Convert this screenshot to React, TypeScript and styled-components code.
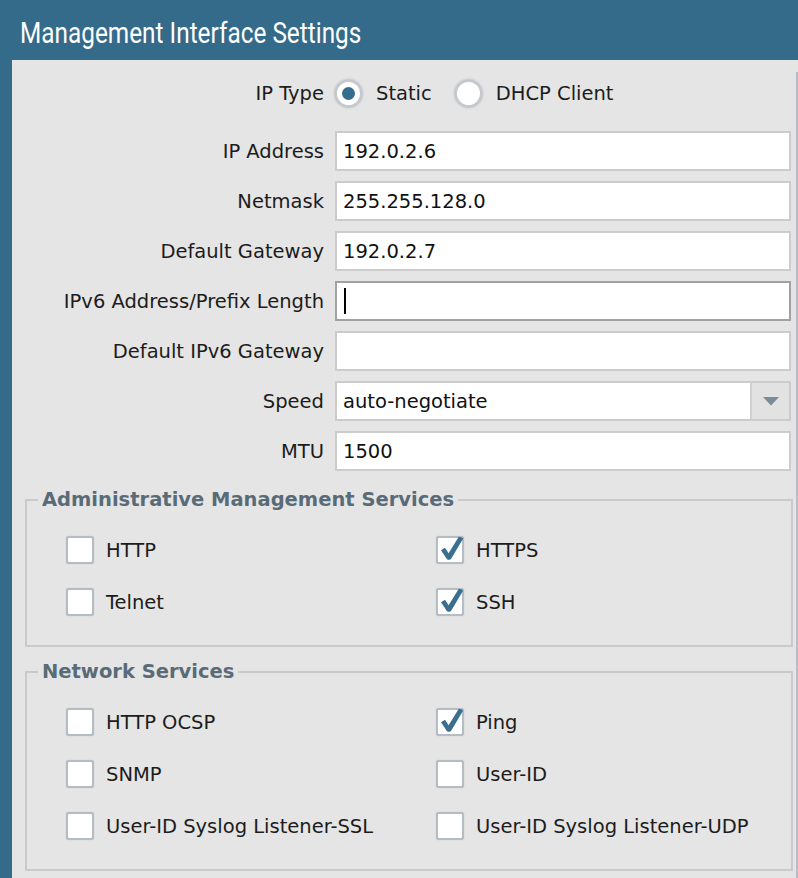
import React from "react";
import styled, { createGlobalStyle } from "styled-components";

const GlobalStyle = createGlobalStyle`
  html, body { margin: 0; padding: 0; background: #e5e5e5; }
  * { box-sizing: border-box; }
`;

const Page = styled.div`
  width: 798px;
  height: 878px;
  background: #346a8a;
  display: flex;
  flex-direction: column;
  overflow: hidden;
  font-family: "DejaVu Sans", "Liberation Sans", sans-serif;
`;

const Header = styled.header`
  height: 60px;
  flex: none;
  display: flex;
  align-items: center;
  padding: 5px 0 0 20px;
`;

const Title = styled.h1`
  margin: 0;
  font-family: Roboto, "Liberation Sans", sans-serif;
  font-weight: 400;
  font-size: 29px;
  color: #ffffff;
  white-space: nowrap;
  display: inline-block;
  transform: scaleX(0.84);
  transform-origin: left center;
`;

const Body = styled.main`
  flex: 1;
  margin-left: 12px;
  background: #e5e5e5;
  display: flex;
`;

const Content = styled.div`
  flex: 1;
  display: flex;
  flex-direction: column;
  padding-top: 13px;
`;

const ScrollTrack = styled.div`
  width: 5px;
  flex: none;
  padding-top: 12px;
  display: flex;
  justify-content: flex-end;
`;

const ScrollThumb = styled.div`
  width: 2px;
  height: 100%;
  background: #b8bcc4;
`;

const Form = styled.div`
  display: flex;
  flex-direction: column;
  gap: 10px;
  padding-right: 2px;
`;

const Row = styled.div<{ $extraBottom?: number }>`
  display: flex;
  align-items: center;
  height: 40px;
  gap: 11px;
  margin-bottom: ${(p) => p.$extraBottom ?? 0}px;
`;

const Label = styled.div`
  width: 312px;
  flex: none;
  text-align: right;
  font-size: 19.5px;
  color: #1c1c1c;
  white-space: nowrap;
`;

const Field = styled.div<{ $focused?: boolean }>`
  flex: 1;
  height: 40px;
  background: #ffffff;
  border: 2px solid ${(p) => (p.$focused ? "#a2a2a2" : "#cccccc")};
  display: flex;
  align-items: center;
  padding-left: 6px;
  font-size: 19.5px;
  color: #111111;
  white-space: nowrap;
  overflow: hidden;
`;

const FieldText = styled.span`
  flex: 1;
`;

const Caret = styled.span`
  display: inline-block;
  width: 2px;
  height: 26px;
  background: #000000;
  margin-left: 1px;
`;

const ArrowBox = styled.div`
  width: 39px;
  height: 100%;
  flex: none;
  background: #e2e2e2;
  border-left: 2px solid #d0d0d0;
  display: flex;
  align-items: center;
  justify-content: center;
`;

const RadioGroup = styled.div`
  display: flex;
  align-items: center;
`;

const RadioOption = styled.label`
  display: flex;
  align-items: center;
  gap: 14px;
  margin-right: 23px;
  font-size: 19.5px;
  color: #1c1c1c;
`;

const RadioCircle = styled.span<{ $checked?: boolean }>`
  width: 27px;
  height: 27px;
  border-radius: 50%;
  background: #ffffff;
  border: 2px solid #c3c9ce;
  box-shadow: 0 0 2px 1px rgba(120, 130, 140, 0.35);
  display: flex;
  align-items: center;
  justify-content: center;
  &::after {
    content: "";
    width: 13px;
    height: 13px;
    border-radius: 50%;
    background: ${(p) => (p.$checked ? "#356d8f" : "transparent")};
  }
`;

const Group = styled.fieldset<{ $top: number }>`
  margin: ${(p) => p.$top}px 0 0 13px;
  padding: 24px 0 29px 0;
  border: 2px solid #cacaca;
  min-width: 0;
`;

const Legend = styled.legend`
  margin-left: 11px;
  padding: 0 4px;
  font-size: 19.5px;
  line-height: 24px;
  font-weight: 700;
  color: #5a6b78;
  white-space: nowrap;
`;

const CheckGrid = styled.div`
  display: grid;
  grid-template-columns: 370px 1fr;
  row-gap: 24px;
  padding-left: 39px;
`;

const CheckItem = styled.label`
  display: flex;
  align-items: center;
  gap: 12px;
  height: 28px;
  font-size: 19.5px;
  color: #1c1c1c;
  white-space: nowrap;
`;

const Box = styled.span`
  width: 28px;
  height: 28px;
  flex: none;
  background: #ffffff;
  border: 2px solid #b4bdc5;
  border-radius: 3px;
  box-shadow: 0 0 1px rgba(90, 100, 110, 0.4);
  display: flex;
  overflow: visible;
`;

const CheckSvg = styled.svg`
  overflow: visible;
  margin: -2px;
`;

function Check({ checked, label }: { checked?: boolean; label: string }) {
  return (
    <CheckItem>
      <Box>
        {checked && (
          <CheckSvg width="28" height="28" viewBox="0 0 28 28">
            <path
              d="M5 14.2 L9 11.8 L12.6 17.2 L22.8 0.8 Q25.6 0.9 27.2 2.6 L15 23 Q13 24.6 11 23.2 Z"
              fill="#3a6f8f"
            />
          </CheckSvg>
        )}
      </Box>
      {label}
    </CheckItem>
  );
}

const adminServices: [string, boolean][] = [
  ["HTTP", false],
  ["HTTPS", true],
  ["Telnet", false],
  ["SSH", true],
];

const networkServices: [string, boolean][] = [
  ["HTTP OCSP", false],
  ["Ping", true],
  ["SNMP", false],
  ["User-ID", false],
  ["User-ID Syslog Listener-SSL", false],
  ["User-ID Syslog Listener-UDP", false],
];

const textFields: { label: string; value: string; focused?: boolean }[] = [
  { label: "IP Address", value: "192.0.2.6" },
  { label: "Netmask", value: "255.255.128.0" },
  { label: "Default Gateway", value: "192.0.2.7" },
  { label: "IPv6 Address/Prefix Length", value: "", focused: true },
  { label: "Default IPv6 Gateway", value: "" },
];

export default function App() {
  return (
    <>
      <GlobalStyle />
      <Page>
        <Header>
          <Title>Management Interface Settings</Title>
        </Header>
        <Body>
          <Content>
            <Form>
              <Row $extraBottom={8}>
                <Label>IP Type</Label>
                <RadioGroup>
                  <RadioOption>
                    <RadioCircle $checked />
                    Static
                  </RadioOption>
                  <RadioOption>
                    <RadioCircle />
                    DHCP Client
                  </RadioOption>
                </RadioGroup>
              </Row>
              {textFields.map((f) => (
                <Row key={f.label}>
                  <Label>{f.label}</Label>
                  <Field $focused={f.focused}>
                    {f.focused && <Caret />}
                    <FieldText>{f.value}</FieldText>
                  </Field>
                </Row>
              ))}
              <Row>
                <Label>Speed</Label>
                <Field>
                  <FieldText>auto-negotiate</FieldText>
                  <ArrowBox>
                    <svg width="16" height="9" viewBox="0 0 16 9">
                      <path d="M0 0 H16 L8 8.5 Z" fill="#7b8c99" />
                    </svg>
                  </ArrowBox>
                </Field>
              </Row>
              <Row>
                <Label>MTU</Label>
                <Field>
                  <FieldText>1500</FieldText>
                </Field>
              </Row>
            </Form>

            <Group $top={17}>
              <Legend>Administrative Management Services</Legend>
              <CheckGrid>
                {adminServices.map(([l, c]) => (
                  <Check key={l} label={l} checked={c} />
                ))}
              </CheckGrid>
            </Group>

            <Group $top={13}>
              <Legend>Network Services</Legend>
              <CheckGrid>
                {networkServices.map(([l, c]) => (
                  <Check key={l} label={l} checked={c} />
                ))}
              </CheckGrid>
            </Group>
          </Content>
          <ScrollTrack>
            <ScrollThumb />
          </ScrollTrack>
        </Body>
      </Page>
    </>
  );
}
